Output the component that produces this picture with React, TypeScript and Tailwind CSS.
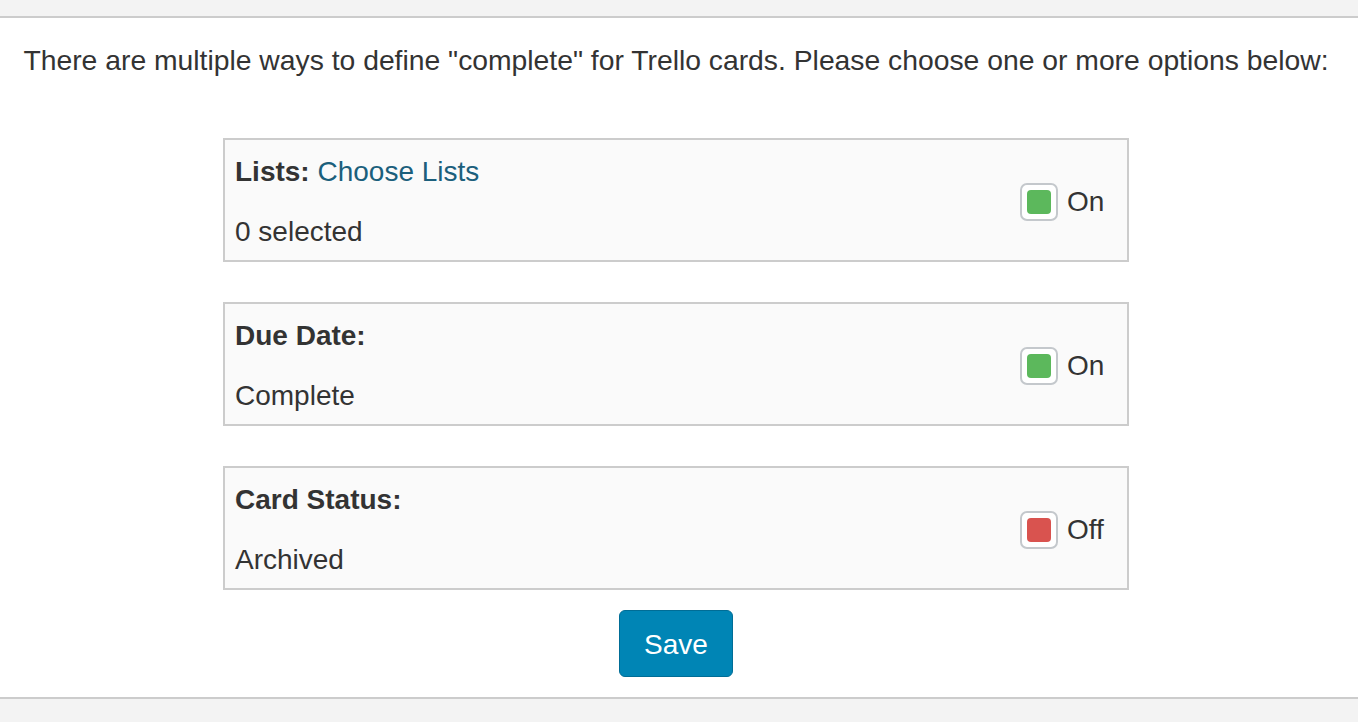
import React, { useState } from 'react';

interface OptionRowProps {
  label: string;
  link?: string;
  detail: string;
  on: boolean;
  onToggle: () => void;
}

const OptionRow: React.FC<OptionRowProps> = ({ label, link, detail, on, onToggle }) => (
  <div className="flex items-center justify-between h-[124px] border-2 border-[#cccccc] bg-[#fafafa] pl-[10px] pr-[22px]">
    <div className="flex flex-col gap-[31px] pt-[2px]">
      <div className="leading-[29px]">
        <span className="font-bold">{label}</span>
        {link && <span className="text-[#1b5f7c]"> {link}</span>}
      </div>
      <div className="leading-[29px]">{detail}</div>
    </div>
    <button type="button" onClick={onToggle} className="flex items-center gap-[9px] mt-[4px]">
      <span className="flex items-center justify-center w-[38px] h-[38px] rounded-[7px] border-2 border-[#c4c8cc] bg-white">
        <span className={`w-[24px] h-[24px] rounded-[4px] ${on ? 'bg-[#5cb85c]' : 'bg-[#d9534f]'}`} />
      </span>
      <span className="w-[38px] text-left">{on ? 'On' : 'Off'}</span>
    </button>
  </div>
);

export default function App() {
  const [lists, setLists] = useState(true);
  const [due, setDue] = useState(true);
  const [status, setStatus] = useState(false);

  return (
    <div
      className="w-[1358px] h-[722px] flex flex-col bg-[#f3f3f3] text-[#333333] text-[28px]"
      style={{ fontFamily: '"Liberation Sans", Arial, sans-serif' }}
    >
      <div className="h-[16px] shrink-0" />
      <div className="flex-1 flex flex-col items-center bg-white border-y-2 border-[#cccccc] pr-[6px]">
        <p className="mt-[27px] leading-[30px] text-center whitespace-nowrap text-[28.3px]">
          There are multiple ways to define "complete" for Trello cards. Please choose one or more options below:
        </p>
        <div className="mt-[63px] w-[906px] flex flex-col gap-[40px]">
          <OptionRow label="Lists:" link="Choose Lists" detail="0 selected" on={lists} onToggle={() => setLists(!lists)} />
          <OptionRow label="Due Date:" detail="Complete" on={due} onToggle={() => setDue(!due)} />
          <OptionRow label="Card Status:" detail="Archived" on={status} onToggle={() => setStatus(!status)} />
        </div>
        <button
          type="button"
          className="mt-[20px] w-[114px] h-[67px] pt-[3px] rounded-[6px] bg-[#0085b5] border border-[#006d96] text-white text-[28px]"
        >
          Save
        </button>
      </div>
      <div className="h-[23px] shrink-0" />
    </div>
  );
}
